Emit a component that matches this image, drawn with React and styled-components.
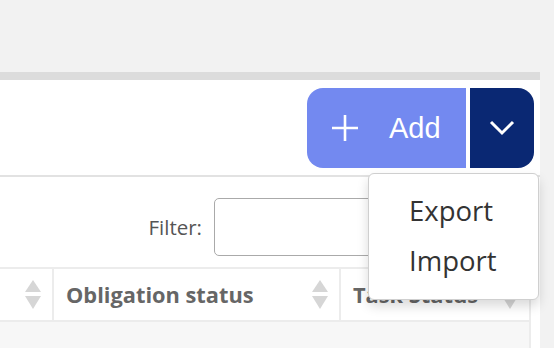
import styled, { createGlobalStyle } from "styled-components";

const GlobalStyle = createGlobalStyle`
  html, body {
    margin: 0;
    padding: 0;
    background: #f2f2f2;
    font-family: "Open Sans", "Liberation Sans", sans-serif;
  }
  #root {
    padding-top: 72px;
  }
`;

function SortIcon() {
  return (
    <SortWrap>
      <svg width="18" height="30" viewBox="0 0 18 30">
        <path d="M9 0 L17 12 L1 12 Z" fill="#d6d6d6" />
        <path d="M1 16 L17 16 L9 29 Z" fill="#d6d6d6" />
      </svg>
    </SortWrap>
  );
}

function App() {
  return (
    <>
      <GlobalStyle />
      <Card>
        <CardHeader>
          <ButtonGroup>
            <AddButton>
              <svg width="28" height="28" viewBox="0 0 28 28">
                <path
                  d="M14 1 V27 M1 14 H27"
                  stroke="#fff"
                  strokeWidth="2.6"
                  fill="none"
                />
              </svg>
              <span>Add</span>
            </AddButton>
            <ToggleButton>
              <svg width="26" height="16" viewBox="0 0 26 16">
                <path
                  d="M2 2 L13 13 L24 2"
                  stroke="#fff"
                  strokeWidth="3"
                  fill="none"
                />
              </svg>
            </ToggleButton>
            <Menu>
              <MenuItem>Export</MenuItem>
              <MenuItem>Import</MenuItem>
            </Menu>
          </ButtonGroup>
        </CardHeader>

        <FilterRow>
          <label>Filter:</label>
          <FilterInput type="text" />
        </FilterRow>

        <Table>
          <thead>
            <tr>
              <HeadCell $width={53}>
                <SortIcon />
              </HeadCell>
              <HeadCell $width={287}>
                Obligation status
                <SortIcon />
              </HeadCell>
              <HeadCell>
                Task Status
                <SortIcon />
              </HeadCell>
            </tr>
          </thead>
          <tbody>
            <tr>
              <BodyCell />
              <BodyCell />
              <BodyCell />
            </tr>
          </tbody>
        </Table>
      </Card>
    </>
  );
}

const Card = styled.div`
  width: 540px;
  min-height: 268px;
  background: #fff;
  border-top: 8px solid #dcdcdc;
`;

const CardHeader = styled.div`
  display: flex;
  justify-content: flex-end;
  padding: 8px 6px 7px 0;
  border-bottom: 2px solid #e2e2e2;
`;

const ButtonGroup = styled.div`
  position: relative;
  display: flex;
  gap: 4px;
  height: 80px;
`;

const AddButton = styled.button`
  display: flex;
  align-items: center;
  gap: 30px;
  height: 80px;
  width: 159px;
  padding: 0 0 0 24px;
  border: none;
  border-radius: 16px 0 0 16px;
  background: #7389f0;
  color: #fff;
  font-family: "Liberation Sans", Arial, sans-serif;
  font-size: 29px;
  span {
    line-height: 1;
    margin-top: 1px;
  }
`;

const ToggleButton = styled.button`
  display: flex;
  align-items: center;
  justify-content: center;
  width: 64px;
  height: 80px;
  padding: 0;
  border: none;
  border-radius: 0 16px 16px 0;
  background: #0a2873;
`;

const Menu = styled.ul`
  position: absolute;
  top: 85px;
  left: 61px;
  width: 169px;
  margin: 0;
  padding: 12px 0 13px;
  list-style: none;
  background: #fff;
  border: 1px solid #cfcfcf;
  border-radius: 6px;
  box-shadow: 0 6px 12px rgba(0, 0, 0, 0.15);
  z-index: 10;
`;

const MenuItem = styled.li`
  height: 50px;
  line-height: 50px;
  padding-left: 40px;
  font-size: 27.5px;
  color: #333;
`;

const FilterRow = styled.div`
  display: flex;
  justify-content: flex-end;
  align-items: center;
  gap: 12px;
  padding: 21px 15px 11px 0;
  label {
    font-size: 20.5px;
    color: #555;
  }
`;

const FilterInput = styled.input`
  width: 311px;
  height: 58px;
  box-sizing: border-box;
  border: 1px solid #aaa;
  border-radius: 5px;
  margin: 0;
`;

const Table = styled.table`
  width: 531px;
  border-collapse: collapse;
  table-layout: fixed;
  border-right: 2px solid #ececec;
`;

const HeadCell = styled.th`
  position: relative;
  ${(p) => (p.$width ? `width: ${p.$width}px;` : "")}
  height: 53px;
  box-sizing: border-box;
  padding: 0 0 0 12px;
  text-align: left;
  font-size: 21.8px;
  font-weight: 700;
  color: #666;
  white-space: nowrap;
  border-top: 2px solid #ececec;
  border-bottom: 2px solid #ececec;
  border-right: 2px solid #ececec;
`;

const SortWrap = styled.span`
  position: absolute;
  right: 10px;
  top: 50%;
  transform: translateY(-50%);
  display: flex;
  filter: blur(0.4px);
`;

const BodyCell = styled.td`
  height: 40px;
  background: #f7f7f7;
`;

export default App;
